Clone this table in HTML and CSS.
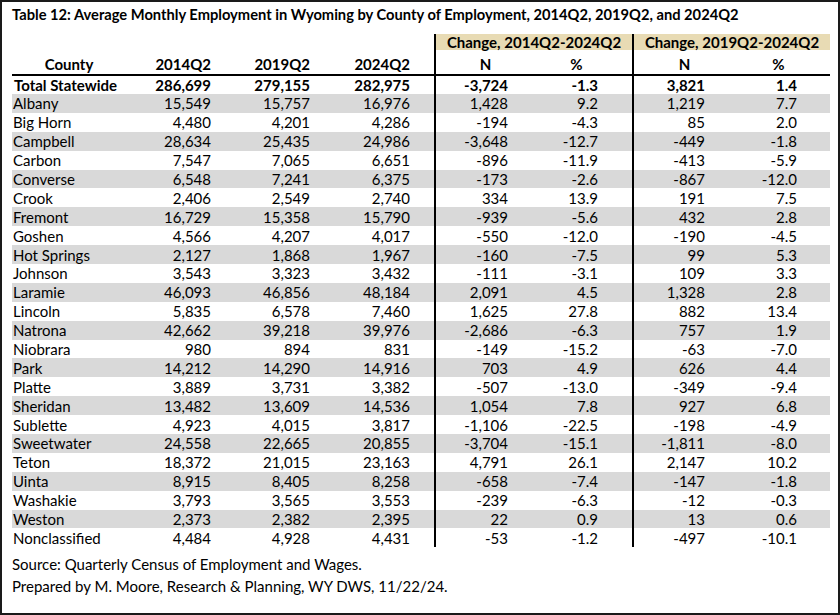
FILE: index.html
```html
<!DOCTYPE html>
<html lang="en">
<head>
<meta charset="utf-8">
<title>Table 12</title>
<link rel="stylesheet" href="styles.css">
</head>
<body>
<div class="frame">
  <h1 class="title">Table 12: Average Monthly Employment in Wyoming by County of Employment, 2014Q2, 2019Q2, and 2024Q2</h1>
  <table class="data">
    <colgroup>
      <col class="w-county"><col class="w-a"><col class="w-b"><col class="w-c"><col class="w-gap">
      <col class="w-n1"><col class="w-p1"><col class="w-n2"><col class="w-p2">
    </colgroup>
    <thead>
      <tr class="h1">
        <th></th><th></th><th></th><th></th><th></th>
        <th class="grp sep" colspan="2">Change, 2014Q2-2024Q2</th>
        <th class="grp sep" colspan="2">Change, 2019Q2-2024Q2</th>
      </tr>
      <tr class="h2">
        <th class="county-h">County</th>
        <th class="num">2014Q2</th>
        <th class="num">2019Q2</th>
        <th class="num">2024Q2</th>
        <th></th>
        <th class="sep n1h">N</th>
        <th class="p1h">%</th>
        <th class="sep n2h">N</th>
        <th class="p2h">%</th>
      </tr>
    </thead>
    <tbody>
      <tr class="total"><td class="name">Total Statewide</td><td class="num">286,699</td><td class="num">279,155</td><td class="num">282,975</td><td></td><td class="sep n1">-3,724</td><td class="p1">-1.3</td><td class="sep n2">3,821</td><td class="p2">1.4</td></tr>
      <tr class="alt"><td class="name">Albany</td><td class="num">15,549</td><td class="num">15,757</td><td class="num">16,976</td><td></td><td class="sep n1">1,428</td><td class="p1">9.2</td><td class="sep n2">1,219</td><td class="p2">7.7</td></tr>
      <tr><td class="name">Big Horn</td><td class="num">4,480</td><td class="num">4,201</td><td class="num">4,286</td><td></td><td class="sep n1">-194</td><td class="p1">-4.3</td><td class="sep n2">85</td><td class="p2">2.0</td></tr>
      <tr class="alt"><td class="name">Campbell</td><td class="num">28,634</td><td class="num">25,435</td><td class="num">24,986</td><td></td><td class="sep n1">-3,648</td><td class="p1">-12.7</td><td class="sep n2">-449</td><td class="p2">-1.8</td></tr>
      <tr><td class="name">Carbon</td><td class="num">7,547</td><td class="num">7,065</td><td class="num">6,651</td><td></td><td class="sep n1">-896</td><td class="p1">-11.9</td><td class="sep n2">-413</td><td class="p2">-5.9</td></tr>
      <tr class="alt"><td class="name">Converse</td><td class="num">6,548</td><td class="num">7,241</td><td class="num">6,375</td><td></td><td class="sep n1">-173</td><td class="p1">-2.6</td><td class="sep n2">-867</td><td class="p2">-12.0</td></tr>
      <tr><td class="name">Crook</td><td class="num">2,406</td><td class="num">2,549</td><td class="num">2,740</td><td></td><td class="sep n1">334</td><td class="p1">13.9</td><td class="sep n2">191</td><td class="p2">7.5</td></tr>
      <tr class="alt"><td class="name">Fremont</td><td class="num">16,729</td><td class="num">15,358</td><td class="num">15,790</td><td></td><td class="sep n1">-939</td><td class="p1">-5.6</td><td class="sep n2">432</td><td class="p2">2.8</td></tr>
      <tr><td class="name">Goshen</td><td class="num">4,566</td><td class="num">4,207</td><td class="num">4,017</td><td></td><td class="sep n1">-550</td><td class="p1">-12.0</td><td class="sep n2">-190</td><td class="p2">-4.5</td></tr>
      <tr class="alt"><td class="name">Hot Springs</td><td class="num">2,127</td><td class="num">1,868</td><td class="num">1,967</td><td></td><td class="sep n1">-160</td><td class="p1">-7.5</td><td class="sep n2">99</td><td class="p2">5.3</td></tr>
      <tr><td class="name">Johnson</td><td class="num">3,543</td><td class="num">3,323</td><td class="num">3,432</td><td></td><td class="sep n1">-111</td><td class="p1">-3.1</td><td class="sep n2">109</td><td class="p2">3.3</td></tr>
      <tr class="alt"><td class="name">Laramie</td><td class="num">46,093</td><td class="num">46,856</td><td class="num">48,184</td><td></td><td class="sep n1">2,091</td><td class="p1">4.5</td><td class="sep n2">1,328</td><td class="p2">2.8</td></tr>
      <tr><td class="name">Lincoln</td><td class="num">5,835</td><td class="num">6,578</td><td class="num">7,460</td><td></td><td class="sep n1">1,625</td><td class="p1">27.8</td><td class="sep n2">882</td><td class="p2">13.4</td></tr>
      <tr class="alt"><td class="name">Natrona</td><td class="num">42,662</td><td class="num">39,218</td><td class="num">39,976</td><td></td><td class="sep n1">-2,686</td><td class="p1">-6.3</td><td class="sep n2">757</td><td class="p2">1.9</td></tr>
      <tr><td class="name">Niobrara</td><td class="num">980</td><td class="num">894</td><td class="num">831</td><td></td><td class="sep n1">-149</td><td class="p1">-15.2</td><td class="sep n2">-63</td><td class="p2">-7.0</td></tr>
      <tr class="alt"><td class="name">Park</td><td class="num">14,212</td><td class="num">14,290</td><td class="num">14,916</td><td></td><td class="sep n1">703</td><td class="p1">4.9</td><td class="sep n2">626</td><td class="p2">4.4</td></tr>
      <tr><td class="name">Platte</td><td class="num">3,889</td><td class="num">3,731</td><td class="num">3,382</td><td></td><td class="sep n1">-507</td><td class="p1">-13.0</td><td class="sep n2">-349</td><td class="p2">-9.4</td></tr>
      <tr class="alt"><td class="name">Sheridan</td><td class="num">13,482</td><td class="num">13,609</td><td class="num">14,536</td><td></td><td class="sep n1">1,054</td><td class="p1">7.8</td><td class="sep n2">927</td><td class="p2">6.8</td></tr>
      <tr><td class="name">Sublette</td><td class="num">4,923</td><td class="num">4,015</td><td class="num">3,817</td><td></td><td class="sep n1">-1,106</td><td class="p1">-22.5</td><td class="sep n2">-198</td><td class="p2">-4.9</td></tr>
      <tr class="alt"><td class="name">Sweetwater</td><td class="num">24,558</td><td class="num">22,665</td><td class="num">20,855</td><td></td><td class="sep n1">-3,704</td><td class="p1">-15.1</td><td class="sep n2">-1,811</td><td class="p2">-8.0</td></tr>
      <tr><td class="name">Teton</td><td class="num">18,372</td><td class="num">21,015</td><td class="num">23,163</td><td></td><td class="sep n1">4,791</td><td class="p1">26.1</td><td class="sep n2">2,147</td><td class="p2">10.2</td></tr>
      <tr class="alt"><td class="name">Uinta</td><td class="num">8,915</td><td class="num">8,405</td><td class="num">8,258</td><td></td><td class="sep n1">-658</td><td class="p1">-7.4</td><td class="sep n2">-147</td><td class="p2">-1.8</td></tr>
      <tr><td class="name">Washakie</td><td class="num">3,793</td><td class="num">3,565</td><td class="num">3,553</td><td></td><td class="sep n1">-239</td><td class="p1">-6.3</td><td class="sep n2">-12</td><td class="p2">-0.3</td></tr>
      <tr class="alt"><td class="name">Weston</td><td class="num">2,373</td><td class="num">2,382</td><td class="num">2,395</td><td></td><td class="sep n1">22</td><td class="p1">0.9</td><td class="sep n2">13</td><td class="p2">0.6</td></tr>
      <tr><td class="name">Nonclassified</td><td class="num">4,484</td><td class="num">4,928</td><td class="num">4,431</td><td></td><td class="sep n1">-53</td><td class="p1">-1.2</td><td class="sep n2">-497</td><td class="p2">-10.1</td></tr>
    </tbody>
  </table>
  <div class="notes">
    <p>Source: Quarterly Census of Employment and Wages.</p>
    <p>Prepared by M. Moore, Research &amp; Planning, WY DWS, 11/22/24.</p>
  </div>
</div>
</body>
</html>
```
FILE: styles.css
```css
* { box-sizing: border-box; }
html, body { margin: 0; padding: 0; background: #fff; }
body {
  font-family: Lato, "Open Sans", "Liberation Sans", sans-serif;
  color: #000;
}
.frame {
  width: 840px;
  height: 615px;
  border: 2px solid #1a1a1a;
  padding: 3px 0 0 10px;
  overflow: hidden;
}
.title {
  margin: 0;
  font-size: 14.7px;
  font-weight: 700;
  line-height: 18px;
  height: 29px;
  white-space: nowrap;
}
.data {
  border-collapse: collapse;
  table-layout: fixed;
  width: 818px;
  font-size: 15px;
}
.w-county { width: 100px; }
.w-a { width: 100px; }
.w-b { width: 99px; }
.w-c { width: 100px; }
.w-gap { width: 24px; }
.w-n1 { width: 100px; }
.w-p1 { width: 98px; }
.w-n2 { width: 102px; }
.w-p2 { width: 95px; }
.data th, .data td {
  padding: 0;
  white-space: nowrap;
  overflow: visible;
}
.data th { font-weight: 700; }
.data .h1 th { height: 16px; line-height: 16px; }
.data .h1 .grp { background: #e8dbb4; text-align: center; font-weight: 700; }
.data .h2 th {
  height: 23px;
  line-height: 20px;
  border-bottom: 2px solid #000;
  vertical-align: top;
  padding-top: 4px;
}
.data tbody td { height: 18.9px; line-height: 18px; }
.data .sep { border-left: 2px solid #000; }
.data .alt td { background: #d9d9d9; }
.data .total td { font-weight: 700; }
.data .county-h { text-align: center; padding-left: 14px; }
.data .num { text-align: right; padding-right: 1px; }
.data .name { text-align: left; padding-left: 1px; }
.data .total .name { padding-left: 2px; }
.data .n1h, .data .n2h { text-align: center; }
.data .p1h { text-align: center; padding-right: 14px; }
.data .p2h { text-align: center; padding-right: 8px; }
.data .n1 { text-align: right; padding-right: 27px; }
.data .p1 { text-align: right; padding-right: 34px; }
.data .n2 { text-align: right; padding-right: 30px; }
.data .p2 { text-align: right; padding-right: 33px; }
.notes { margin-top: 6px; }
.notes p {
  margin: 0;
  font-size: 15px;
  line-height: 22px;
}
```
